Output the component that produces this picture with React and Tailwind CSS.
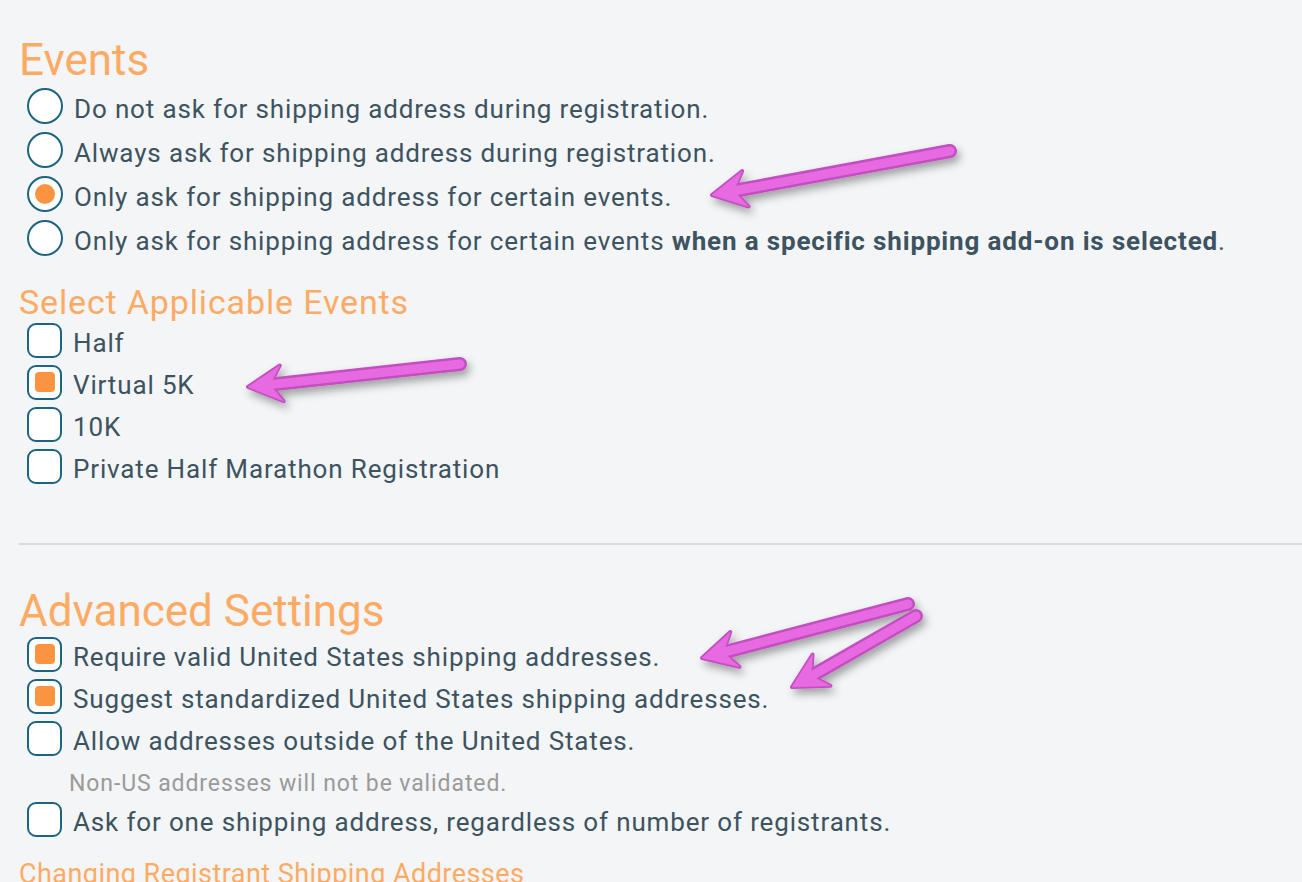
import React from 'react';

const RADIOS = [
    { label: 'Do not ask for shipping address during registration.' },
    { label: 'Always ask for shipping address during registration.' },
    { label: 'Only ask for shipping address for certain events.', checked: true },
    { label: 'Only ask for shipping address for certain events ', bold: 'when a specific shipping add-on is selected', tail: '.' },
];

const EVENTS = [
    { label: 'Half' },
    { label: 'Virtual 5K', checked: true },
    { label: '10K' },
    { label: 'Private Half Marathon Registration' },
];

const Radio = ({ checked, children }) => (
    <div className="flex items-center h-[42px]">
        <span className="w-9 h-9 rounded-full border-2 border-[#1d6382] bg-white flex items-center justify-center shrink-0">
            {checked && <span className="w-5 h-5 rounded-full bg-[#fb9440]" />}
        </span>
        <span className="ml-[11px] pt-[6px] leading-[36px] text-[26px] tracking-[0.85px] text-[#3d5360] whitespace-nowrap">{children}</span>
    </div>
);

const Check = ({ checked, children }) => (
    <div className="flex items-center h-[42px]">
        <span className="w-[35px] h-[35px] rounded-[9px] border-2 border-[#1d6382] bg-white flex items-center justify-center shrink-0">
            {checked && <span className="w-5 h-5 rounded-[4px] bg-[#fb9440]" />}
        </span>
        <span className="ml-[11px] pt-[6px] leading-[36px] text-[26px] tracking-[0.85px] text-[#3d5360] whitespace-nowrap">{children}</span>
    </div>
);

// arrowhead drawn from tip toward tail
const Arrow = ({ tip, tail, len = 34, half = 18, notch = 22 }) => {
    const dx = tail[0] - tip[0];
    const dy = tail[1] - tip[1];
    const d = Math.hypot(dx, dy);
    const ux = dx / d, uy = dy / d;
    const px = -uy, py = ux;
    const bx = tip[0] + ux * len, by = tip[1] + uy * len;
    const p1 = [bx + px * half, by + py * half];
    const p2 = [bx - px * half, by - py * half];
    const n = [tip[0] + ux * notch, tip[1] + uy * notch];
    const head = `M${tip[0]},${tip[1]} L${p1[0]},${p1[1]} L${n[0]},${n[1]} L${p2[0]},${p2[1]} Z`;
    return (
        <g>
            <line x1={n[0]} y1={n[1]} x2={tail[0]} y2={tail[1]} stroke="#c24fbf" strokeWidth="14" strokeLinecap="round" />
            <path d={head} fill="#c24fbf" stroke="#c24fbf" strokeWidth="4" strokeLinejoin="round" />
            <line x1={n[0]} y1={n[1]} x2={tail[0]} y2={tail[1]} stroke="#e86be3" strokeWidth="9" strokeLinecap="round" />
            <path d={head} fill="#e86be3" stroke="#e86be3" strokeWidth="0.5" />
        </g>
    );
};

export default function App() {
    return (
        <div className="relative w-[1302px] h-[882px] overflow-hidden bg-[#f3f5f7]" style={{ fontFamily: 'Roboto, "Liberation Sans", sans-serif' }}>
            <div className="pl-[19px] pt-[34px]">
                <h2 className="text-[44px] leading-[52px] text-[#fdab64] font-normal">Events</h2>
                <div className="ml-[8px] -mt-[1px] flex flex-col gap-[2px]">
                    {RADIOS.map((r, i) => (
                        <Radio key={i} checked={r.checked}>
                            {r.label}
                            {r.bold && <b className="font-bold">{r.bold}</b>}
                            {r.tail}
                        </Radio>
                    ))}
                </div>

                <h3 className="mt-[25px] text-[34px] tracking-[0.85px] leading-[36px] text-[#fdab64] font-normal">Select Applicable Events</h3>
                <div className="ml-[8px] -mt-[1px] flex flex-col">
                    {EVENTS.map((e, i) => (
                        <Check key={i} checked={e.checked}>{e.label}</Check>
                    ))}
                </div>

                <div className="mt-[56px] h-[2px] bg-[#d9dbde]" />

                <h2 className="mt-[40px] text-[44px] leading-[52px] text-[#fdab64] font-normal">Advanced Settings</h2>
                <div className="ml-[8px] -mt-[4px] flex flex-col">
                    <Check checked>Require valid United States shipping addresses.</Check>
                    <Check checked>Suggest standardized United States shipping addresses.</Check>
                    <Check>Allow addresses outside of the United States.</Check>
                    <p className="ml-[42px] mt-[11px] text-[23px] tracking-[0.9px] leading-[28px] text-[#9a9a9a]">Non-US addresses will not be validated.</p>
                    <Check>Ask for one shipping address, regardless of number of registrants.</Check>
                </div>

                <h3 className="mt-[18px] text-[27px] tracking-[0.45px] leading-[32px] text-[#fdab64] font-normal whitespace-nowrap">Changing Registrant Shipping Addresses</h3>
            </div>

            <svg className="absolute inset-0 pointer-events-none" width="1302" height="882">
                <defs>
                    <filter id="sh" x="-20%" y="-50%" width="140%" height="200%">
                        <feDropShadow dx="3" dy="5" stdDeviation="4" floodColor="#000" floodOpacity="0.35" />
                    </filter>
                </defs>
                <g filter="url(#sh)">
                    <Arrow tip={[712, 195]} tail={[950, 151]} />
                    <Arrow tip={[248, 387]} tail={[460, 364]} />
                    <Arrow tip={[702, 658]} tail={[908, 604]} />
                    <Arrow tip={[792, 687]} tail={[916, 616]} />
                </g>
            </svg>
        </div>
    );
}
